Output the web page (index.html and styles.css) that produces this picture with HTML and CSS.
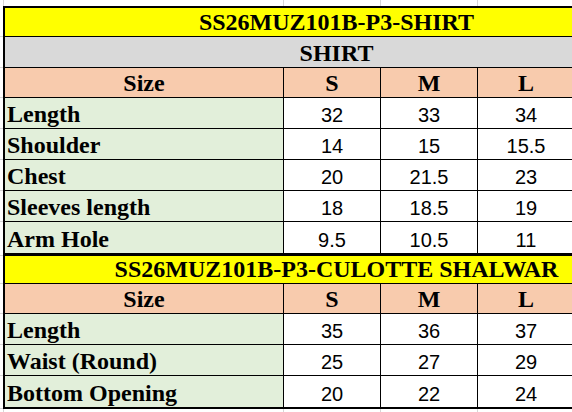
FILE: index.html
```html
<!DOCTYPE html>
<html>
<head>
<meta charset="utf-8">
<link rel="stylesheet" href="styles.css">
</head>
<body>
<table class="sheet">
  <colgroup>
    <col class="c-gut"><col class="c-label"><col class="c-num"><col class="c-num"><col class="c-num">
  </colgroup>
  <tr class="r-gap-top"><td class="gut"></td><td class="gl"></td><td class="gn"></td><td class="gn"></td><td class="gn"></td></tr>

  <tr class="r-title first"><td class="gut"></td><td colspan="4" class="title">SS26MUZ101B-P3-SHIRT</td></tr>
  <tr class="r-sub"><td class="gut"></td><td colspan="4" class="sub">SHIRT</td></tr>
  <tr class="r-head"><td class="gut"></td><td class="hl">Size</td><td class="hn">S</td><td class="hn">M</td><td class="hn">L</td></tr>
  <tr class="r-data"><td class="gut"></td><td class="lab">Length</td><td class="num">32</td><td class="num">33</td><td class="num">34</td></tr>
  <tr class="r-data"><td class="gut"></td><td class="lab">Shoulder</td><td class="num">14</td><td class="num">15</td><td class="num">15.5</td></tr>
  <tr class="r-data"><td class="gut"></td><td class="lab">Chest</td><td class="num">20</td><td class="num">21.5</td><td class="num">23</td></tr>
  <tr class="r-data"><td class="gut"></td><td class="lab">Sleeves length</td><td class="num">18</td><td class="num">18.5</td><td class="num">19</td></tr>
  <tr class="r-data r-sep"><td class="gut"></td><td class="lab">Arm Hole</td><td class="num">9.5</td><td class="num">10.5</td><td class="num">11</td></tr>

  <tr class="r-title second"><td class="gut"></td><td colspan="4" class="title">SS26MUZ101B-P3-CULOTTE SHALWAR</td></tr>
  <tr class="r-head"><td class="gut"></td><td class="hl">Size</td><td class="hn">S</td><td class="hn">M</td><td class="hn">L</td></tr>
  <tr class="r-data"><td class="gut"></td><td class="lab">Length</td><td class="num">35</td><td class="num">36</td><td class="num">37</td></tr>
  <tr class="r-data"><td class="gut"></td><td class="lab">Waist (Round)</td><td class="num">25</td><td class="num">27</td><td class="num">29</td></tr>
  <tr class="r-data r-last"><td class="gut"></td><td class="lab">Bottom Opening</td><td class="num">20</td><td class="num">22</td><td class="num">24</td></tr>

  <tr class="r-gap-bot"><td class="gut"></td><td class="gl"></td><td class="gn"></td><td class="gn"></td><td class="gn"></td></tr>
</table>
</body>
</html>
```

FILE: styles.css
```css
html, body {
  margin: 0;
  padding: 0;
  overflow: hidden;
  background: #ffffff;
}

.sheet {
  border-collapse: separate;
  border-spacing: 0;
  table-layout: fixed;
  width: 575px;
  font-family: "Liberation Serif", "Times New Roman", serif;
  color: #000;
}

.c-gut { width: 3px; }
.c-label { width: 281px; }
.c-num { width: 97px; }

td {
  padding: 0;
  vertical-align: bottom;
  box-sizing: border-box;
}

/* gridline gutters */
.gut {
  border-bottom: 1px solid #d6d6d6;
}
.r-gap-top td { height: 6px; border-bottom: 0; }
.r-gap-top .gl { border-left: 1px solid #d6d6d6; }
.r-gap-top .gl, .r-gap-top .gn { border-right: 1px solid #d6d6d6; }
.r-gap-bot td { height: 3px; border-bottom: 0; }
.r-gap-bot .gl { border-left: 1px solid #d6d6d6; }
.r-gap-bot .gl, .r-gap-bot .gn { border-right: 1px solid #d6d6d6; }

/* title rows */
.title, .sub {
  border-left: 2px solid #000;
  border-bottom: 1px solid #000;
  text-align: center;
  padding-left: 93px;
  font-weight: bold;
  font-size: 24px;
  line-height: 24px;
  padding-bottom: 2px;
  white-space: nowrap;
}
.title { background: #ffff00; }
.sub { background: #d9d9d9; }

.r-title.first td { height: 31px; }
.r-title.first .title { border-top: 2px solid #000; }
.r-title.second td { height: 28px; }
.r-sub td { height: 31px; }

/* header rows */
.r-head td { height: 30px; }
.hl, .hn {
  background: #f8cbad;
  border-bottom: 1px solid #000;
  border-right: 1px solid #000;
  font-weight: bold;
  font-size: 24px;
  line-height: 24px;
  padding-bottom: 2px;
  text-align: center;
}
.hl { border-left: 2px solid #000; }

/* data rows */
.r-data td { height: 31px; }
.lab {
  background: #e2efda;
  border-left: 2px solid #000;
  border-right: 1px solid #000;
  border-bottom: 1px solid #000;
  font-weight: bold;
  font-size: 24px;
  line-height: 24px;
  padding-left: 2px;
  padding-bottom: 2px;
  white-space: nowrap;
}
.num {
  background: #ffffff;
  border-right: 1px solid #000;
  border-bottom: 1px solid #000;
  font-family: "Liberation Sans", Arial, sans-serif;
  font-size: 20px;
  line-height: 20px;
  padding-bottom: 3px;
  text-align: center;
}

.r-sep td { height: 34px; }
.r-sep .lab, .r-sep .num { border-bottom-width: 3px; }
.r-last td { height: 33px; }
.r-last .lab, .r-last .num { border-bottom-width: 2px; }
```
